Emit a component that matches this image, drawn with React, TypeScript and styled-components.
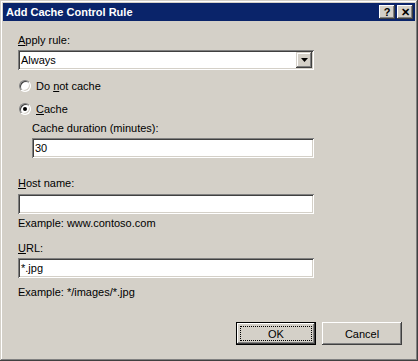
import React from "react";
import styled, { createGlobalStyle } from "styled-components";

const GlobalStyle = createGlobalStyle`
  html, body {
    margin: 0;
    padding: 0;
    background: #d4d0c8;
  }
  * {
    box-sizing: border-box;
  }
`;

const Window = styled.div`
  width: 418px;
  height: 361px;
  background: #d4d0c8;
  padding: 3px;
  display: flex;
  flex-direction: column;
  font-family: "Liberation Sans", Arial, sans-serif;
  font-size: 11px;
  color: #000;
  box-shadow: inset -1px -1px 0 #404040, inset 1px 1px 0 #d4d0c8,
    inset -2px -2px 0 #808080, inset 2px 2px 0 #ffffff;
`;

const TitleBar = styled.div`
  height: 18px;
  background: #0a246a;
  display: flex;
  align-items: center;
  padding: 0 2px 0 3px;
`;

const Title = styled.span`
  flex: 1;
  color: #fff;
  font-weight: bold;
  font-size: 11px;
`;

const CaptionButton = styled.span<{ $gap?: boolean }>`
  width: 16px;
  height: 14px;
  margin-left: ${(p) => (p.$gap ? "2px" : "0")};
  background: #d4d0c8;
  display: flex;
  align-items: center;
  justify-content: center;
  font-weight: bold;
  font-size: 11px;
  line-height: 1;
  box-shadow: inset -1px -1px 0 #404040, inset 1px 1px 0 #ffffff,
    inset -2px -2px 0 #808080;
`;

const Content = styled.div`
  flex: 1;
  display: flex;
  flex-direction: column;
  padding: 13px 0 0 15px;
`;

const Label = styled.div<{ $top?: number }>`
  line-height: 13px;
  height: 13px;
  margin-top: ${(p) => p.$top ?? 0}px;
`;

const Key = styled.span`
  text-decoration: underline;
`;

const Sunken = styled.div<{ $width: number; $top?: number }>`
  width: ${(p) => p.$width}px;
  height: 20px;
  margin-top: ${(p) => p.$top ?? 3}px;
  background: #fff;
  display: flex;
  align-items: center;
  padding: 0 3px;
  box-shadow: inset 1px 1px 0 #808080, inset -1px -1px 0 #ffffff,
    inset 2px 2px 0 #404040, inset -2px -2px 0 #d4d0c8;
`;

const Value = styled.span`
  flex: 1;
  line-height: 13px;
`;

const DropButton = styled.span`
  width: 16px;
  height: 16px;
  margin-right: -1px;
  background: #d4d0c8;
  display: flex;
  align-items: center;
  justify-content: center;
  box-shadow: inset -1px -1px 0 #404040, inset 1px 1px 0 #d4d0c8,
    inset -2px -2px 0 #808080, inset 2px 2px 0 #ffffff;
`;

const RadioRow = styled.div<{ $top: number }>`
  display: flex;
  align-items: center;
  height: 13px;
  margin-top: ${(p) => p.$top}px;
  margin-left: 1px;
  gap: 5px;
`;

const RadioCircle = styled.span<{ $checked?: boolean }>`
  width: 12px;
  height: 12px;
  border-radius: 50%;
  background: #fff;
  border: 1px solid;
  border-color: #808080 #ffffff #ffffff #808080;
  box-shadow: inset 1px 1px 0 #404040, inset -1px -1px 0 #d4d0c8;
  display: flex;
  align-items: center;
  justify-content: center;
  &::after {
    content: "";
    width: 4px;
    height: 4px;
    border-radius: 50%;
    background: ${(p) => (p.$checked ? "#000" : "transparent")};
  }
`;

const Indent = styled.div`
  display: flex;
  flex-direction: column;
  margin-left: 14px;
`;

const Footer = styled.div`
  margin-top: auto;
  display: flex;
  justify-content: flex-end;
  gap: 6px;
  padding: 0 13px 13px 0;
`;

const Button = styled.button<{ $default?: boolean }>`
  width: 80px;
  height: 23px;
  padding: 0;
  border: none;
  background: #d4d0c8;
  font-family: "Liberation Sans", Arial, sans-serif;
  font-size: 11px;
  color: #000;
  position: relative;
  box-shadow: ${(p) =>
    p.$default
      ? "inset 0 0 0 1px #000, inset -2px -2px 0 #404040, inset 2px 2px 0 #ffffff, inset -3px -3px 0 #808080"
      : "inset -1px -1px 0 #404040, inset 1px 1px 0 #ffffff, inset -2px -2px 0 #808080"};
`;

const FocusRing = styled.span`
  position: absolute;
  inset: 4px;
  border: 1px dotted #000;
  display: flex;
  align-items: center;
  justify-content: center;
`;

export default function App() {
  return (
    <>
      <GlobalStyle />
      <Window>
        <TitleBar>
          <Title>Add Cache Control Rule</Title>
          <CaptionButton>?</CaptionButton>
          <CaptionButton $gap>✕</CaptionButton>
        </TitleBar>
        <Content>
          <Label $top={0}>
            <Key>A</Key>pply rule:
          </Label>
          <Sunken $width={296}>
            <Value>Always</Value>
            <DropButton>
              <svg width="7" height="4" viewBox="0 0 7 4">
                <path d="M0 0h7L3.5 4z" fill="#000" />
              </svg>
            </DropButton>
          </Sunken>
          <RadioRow $top={9}>
            <RadioCircle />
            <span>
              Do <Key>n</Key>ot cache
            </span>
          </RadioRow>
          <RadioRow $top={10}>
            <RadioCircle $checked />
            <span>
              <Key>C</Key>ache
            </span>
          </RadioRow>
          <Indent>
            <Label $top={7}>Cache duration (minutes):</Label>
            <Sunken $width={282}>
              <Value>30</Value>
            </Sunken>
          </Indent>
          <Label $top={19}>
            <Key>H</Key>ost name:
          </Label>
          <Sunken $width={296} $top={4}>
            <Value />
          </Sunken>
          <Label $top={3}>Example: www.contoso.com</Label>
          <Label $top={12}>
            <Key>U</Key>RL:
          </Label>
          <Sunken $width={296}>
            <Value>*.jpg</Value>
          </Sunken>
          <Label $top={8}>Example: */images/*.jpg</Label>
          <Footer>
            <Button $default>
              <FocusRing>OK</FocusRing>
            </Button>
            <Button>Cancel</Button>
          </Footer>
        </Content>
      </Window>
    </>
  );
}
